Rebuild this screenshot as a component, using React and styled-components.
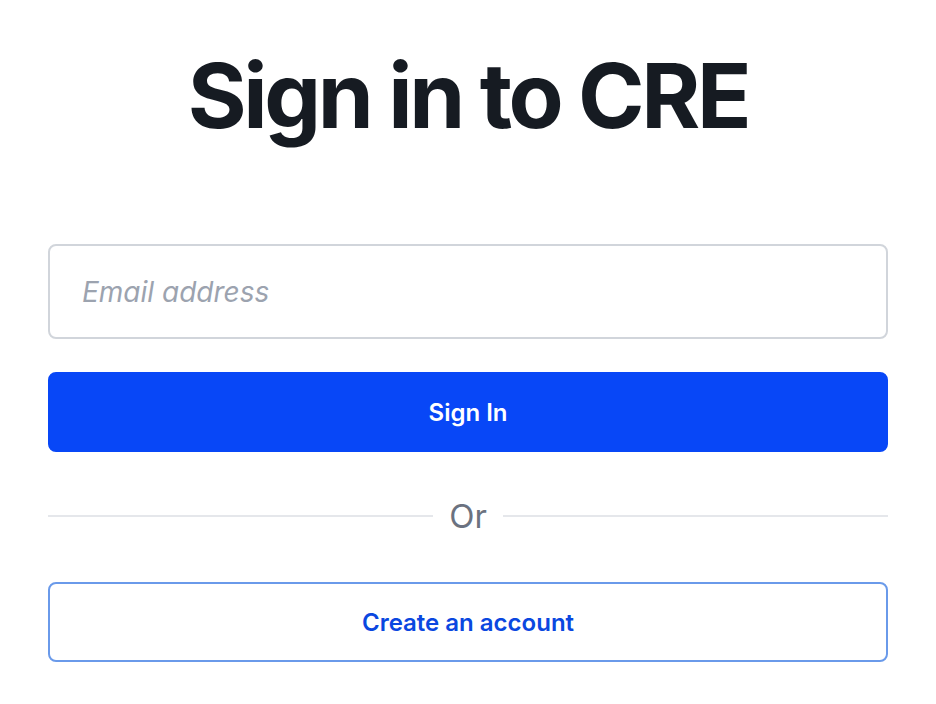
import React, {useState} from 'react';
import styled, {createGlobalStyle} from 'styled-components';

const GlobalStyle = createGlobalStyle`
body {
  margin: 0;
  background: #ffffff;
  font-family: Inter, "Liberation Sans", sans-serif;
}
`

const Page = styled.div`
width: 936px;
padding: 0 48px;
box-sizing: border-box;
display: flex;
flex-direction: column;
`

const Title = styled.h1`
margin: 44px 0 0 0;
text-align: center;
font-size: 90px;
line-height: 104px;
font-weight: 700;
letter-spacing: -0.038em;
color: #161b22;
`

const Form = styled.form`
margin-top: 96px;
display: flex;
flex-direction: column;
`

const EmailInput = styled.input`
height: 95px;
box-sizing: border-box;
border: 2px solid #d1d5db;
border-radius: 8px;
padding: 0 32px;
font-family: Inter, "Liberation Sans", sans-serif;
font-size: 28px;
color: #161b22;
outline: none;
&::placeholder {
  color: #9ca3af;
  font-style: italic;
}
`

const Button = styled.button`
height: ${p => p.$height}px;
box-sizing: border-box;
border-radius: 8px;
font-family: Inter, "Liberation Sans", sans-serif;
font-size: 24px;
font-weight: 600;
cursor: pointer;
border: 2px solid ${p => p.$primary ? '#0847f7' : '#6a9aea'};
background: ${p => p.$primary ? '#0847f7' : '#ffffff'};
color: ${p => p.$primary ? '#ffffff' : '#0a47e0'};
`

const Divider = styled.div`
margin: 46px 0 48px 0;
display: flex;
flex-direction: row;
align-items: center;
gap: 16px;
font-size: 33px;
line-height: 36px;
color: #6b7280;
&::before, &::after {
  content: '';
  flex: 1;
  height: 2px;
  background: #e5e7eb;
}
`

const App = () => {
  const [email, setEmail] = useState('');

  return (
    <>
      <GlobalStyle />
      <Page>
        <Title>Sign in to CRE</Title>
        <Form onSubmit={(e) => e.preventDefault()}>
          <EmailInput
            type="email"
            placeholder="Email address"
            value={email}
            onChange={(e) => setEmail(e.target.value)}
          />
          <Button type="submit" $primary $height={80} style={{marginTop: 33}}>Sign In</Button>
        </Form>
        <Divider>Or</Divider>
        <Button type="button" $height={80}>Create an account</Button>
      </Page>
    </>
  )
}

export default App;
